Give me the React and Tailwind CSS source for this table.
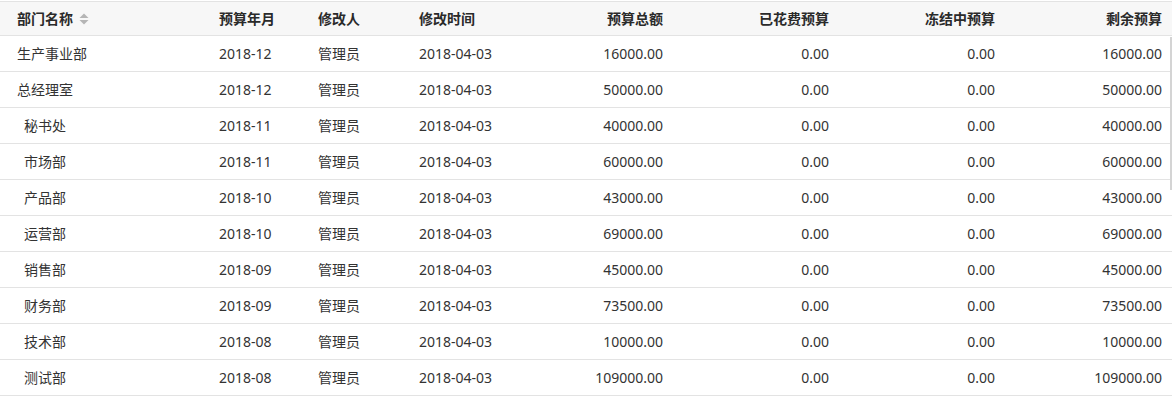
const rows = [
  { name: '生产事业部', child: false, month: '2018-12', total: '16000.00', left: '16000.00' },
  { name: '总经理室', child: false, month: '2018-12', total: '50000.00', left: '50000.00' },
  { name: '秘书处', child: true, month: '2018-11', total: '40000.00', left: '40000.00' },
  { name: '市场部', child: true, month: '2018-11', total: '60000.00', left: '60000.00' },
  { name: '产品部', child: true, month: '2018-10', total: '43000.00', left: '43000.00' },
  { name: '运营部', child: true, month: '2018-10', total: '69000.00', left: '69000.00' },
  { name: '销售部', child: true, month: '2018-09', total: '45000.00', left: '45000.00' },
  { name: '财务部', child: true, month: '2018-09', total: '73500.00', left: '73500.00' },
  { name: '技术部', child: true, month: '2018-08', total: '10000.00', left: '10000.00' },
  { name: '测试部', child: true, month: '2018-08', total: '109000.00', left: '109000.00' },
];

const grid = 'grid grid-cols-[202px_99px_101px_140px_137px_166px_166px_161px] items-center';

const SortIcon = () => (
  <svg width="10" height="12" viewBox="0 0 10 12" className="ml-[6px]">
    <path d="M5 0.5 L9.5 5 L0.5 5 Z" fill="#b5b5b5" />
    <path d="M5 11.5 L9.5 7 L0.5 7 Z" fill="#b5b5b5" />
  </svg>
);

export default function App() {
  return (
    <div className="relative w-[1172px] bg-white pt-px text-[14px] text-[#333] font-['Noto_Sans','Noto_Sans_CJK_SC',sans-serif]">
      <div className={`${grid} h-[35px] border-t border-b border-[#e3e3e3] bg-[#f7f7f7] font-bold text-[#2a2a2a]`}>
        <div className="flex items-center pl-[17px]">部门名称<SortIcon /></div>
        <div className="pl-[17px]">预算年月</div>
        <div className="pl-[17px]">修改人</div>
        <div className="pl-[17px]">修改时间</div>
        <div className="pr-[16px] text-right">预算总额</div>
        <div className="pr-[16px] text-right">已花费预算</div>
        <div className="pr-[16px] text-right">冻结中预算</div>
        <div className="pr-[10px] text-right">剩余预算</div>
      </div>
      {rows.map((r) => (
        <div key={r.name} className={`${grid} h-[36px] border-b border-[#e3e3e3]`}>
          <div className={r.child ? 'pl-[24px]' : 'pl-[17px]'}>{r.name}</div>
          <div className="pl-[17px]">{r.month}</div>
          <div className="pl-[17px]">管理员</div>
          <div className="pl-[17px]">2018-04-03</div>
          <div className="pr-[16px] text-right">{r.total}</div>
          <div className="pr-[16px] text-right">0.00</div>
          <div className="pr-[16px] text-right">0.00</div>
          <div className="pr-[10px] text-right">{r.left}</div>
        </div>
      ))}
      <div className="absolute right-0 top-[37px] h-[153px] w-[2px] bg-[#d4d4d4]" />
    </div>
  );
}
